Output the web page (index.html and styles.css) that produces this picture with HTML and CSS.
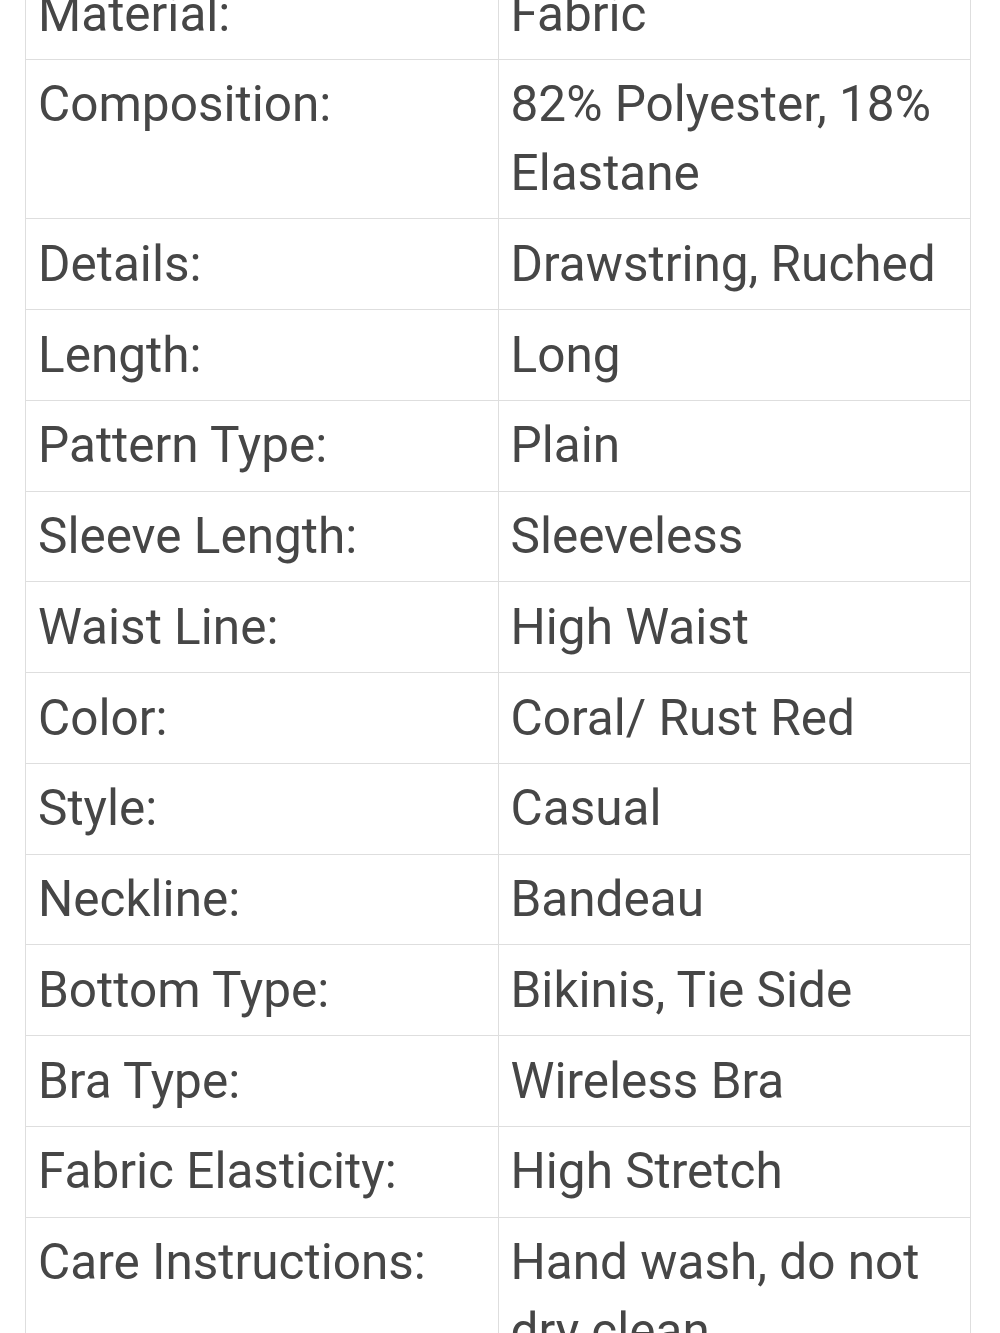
FILE: index.html
```html
<!DOCTYPE html>
<html lang="en">
<head>
<meta charset="utf-8">
<title>Product details</title>
<link rel="stylesheet" href="styles.css">
</head>
<body>
<div class="page">
  <table class="specs">
    <colgroup><col class="col-key"><col class="col-val"></colgroup>
    <tbody>
      <tr><td>Material:</td><td>Fabric</td></tr>
      <tr><td>Composition:</td><td>82% Polyester, 18% Elastane</td></tr>
      <tr><td>Details:</td><td>Drawstring, Ruched</td></tr>
      <tr><td>Length:</td><td>Long</td></tr>
      <tr><td>Pattern Type:</td><td>Plain</td></tr>
      <tr><td>Sleeve Length:</td><td>Sleeveless</td></tr>
      <tr><td>Waist Line:</td><td>High Waist</td></tr>
      <tr><td>Color:</td><td>Coral/ Rust Red</td></tr>
      <tr><td>Style:</td><td>Casual</td></tr>
      <tr><td>Neckline:</td><td>Bandeau</td></tr>
      <tr><td>Bottom Type:</td><td>Bikinis, Tie Side</td></tr>
      <tr><td>Bra Type:</td><td>Wireless Bra</td></tr>
      <tr><td>Fabric Elasticity:</td><td>High Stretch</td></tr>
      <tr><td>Care Instructions:</td><td>Hand wash, do not dry clean</td></tr>
    </tbody>
  </table>
</div>
</body>
</html>
```

FILE: styles.css
```css
html, body {
  margin: 0;
  padding: 0;
  background: #ffffff;
}

body {
  font-family: Roboto, "Liberation Sans", Arial, sans-serif;
  color: #464646;
  overflow: hidden;
}

.page {
  padding: 0 29px 0 25px;
}

.specs {
  width: 946px;
  margin-top: -32px;
  border-collapse: collapse;
  table-layout: fixed;
}

.col-key,
.col-val {
  width: 50%;
}

.specs td {
  border: 1px solid #dedede;
  padding: 10.5px 12px 10.5px 12px;
  font-size: 49.5px;
  line-height: 68.75px;
  vertical-align: top;
}
```
